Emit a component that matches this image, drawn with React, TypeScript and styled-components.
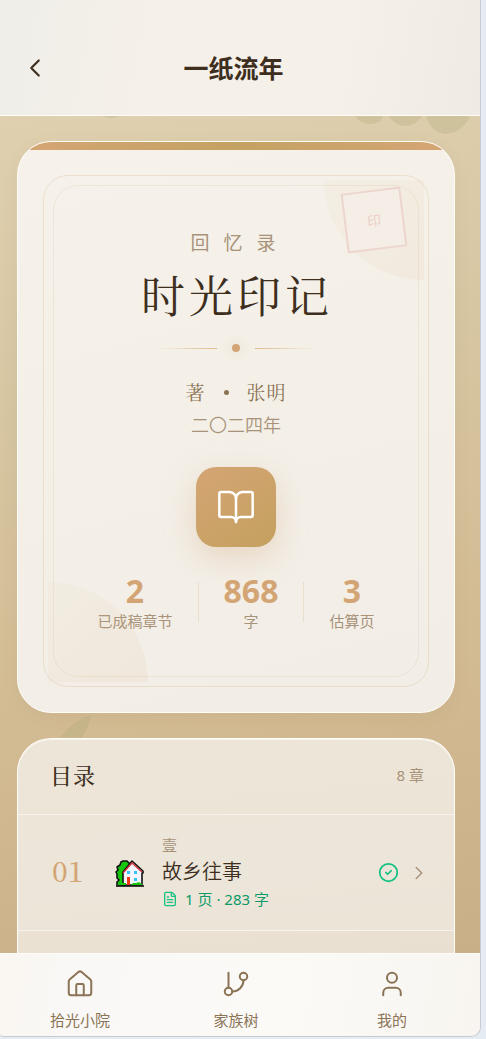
import React from "react";
import styled, { createGlobalStyle } from "styled-components";
import {
  BookOpen,
  ChevronLeft,
  ChevronRight,
  CircleCheck,
  FileText,
  GitBranch,
  House,
  User,
} from "lucide-react";

const sans = `"Noto Sans", "Noto Sans CJK SC", sans-serif`;
const serif = `"Noto Serif CJK SC", "Noto Serif SC", "Liberation Serif", "Noto Sans CJK SC", serif`;

const GlobalStyle = createGlobalStyle`
  *, *::before, *::after { box-sizing: border-box; }
  body { margin: 0; background: #e6ecf3; font-family: ${sans}; color: #3d2e1e; }
  button { font: inherit; color: inherit; border: 0; padding: 0; background: none; cursor: pointer; }
  a { color: inherit; text-decoration: none; }
  h1, h2, h3, p { margin: 0; font-weight: 400; }
  svg { display: block; }
`;

const Page = styled.div`
  display: flex;
  height: 100vh;
  padding: 0 5px 2px 0;
`;

const Phone = styled.div`
  display: flex;
  flex-direction: column;
  flex: 1;
  min-width: 0;
  overflow: hidden;
  border: solid #c9ccce;
  border-width: 0 1px 1px 0;
  border-radius: 0 0 10px 4px;
`;

const Header = styled.header`
  display: grid;
  grid-template-columns: 36px 1fr 36px;
  align-items: center;
  flex: none;
  padding: 45px 30px 25px 17px;
  border-bottom: 1px solid #fffdf8;
  background: linear-gradient(100deg, #efeee8 0%, #f5f0e9 32%, #f5f0e8 70%, #efebe4 100%);
`;

const BackButton = styled.button`
  display: flex;
  align-items: center;
  justify-content: center;
  width: 36px;
  height: 45px;
`;

const PageTitle = styled.h1`
  font-size: 25px;
  font-weight: 700;
  line-height: 36px;
  text-align: center;
`;

const Main = styled.main`
  position: relative;
  display: flex;
  flex-direction: column;
  gap: 25px;
  flex: 1;
  min-height: 0;
  overflow: hidden;
  padding: 25px 25px 0 17px;
  background: linear-gradient(168deg, #dfd0b0 0%, #d6c5a0 35%, #d2ba92 68%, #c9af87 100%);
`;

const Foliage = styled.svg`
  position: absolute;
  top: 0;
  left: 0;
  width: 100%;
  height: 100%;
  fill: #aaa878;
  opacity: 0.27;
`;

const Cover = styled.section`
  position: relative;
  flex: none;
  overflow: hidden;
  border: 1px solid #fffdf8;
  border-radius: 34px;
  background: linear-gradient(165deg, #f6f1ea 0%, #f4f0e8 45%, #f2ede6 100%);
  box-shadow: 0 4px 16px rgba(139, 115, 85, 0.08);

  &::before {
    content: "";
    display: block;
    height: 8px;
    background: linear-gradient(90deg, #d4a574, #c4a263 50%, #d4a574);
  }
`;

const Frame = styled.div`
  position: relative;
  margin: 25px;
  padding: 9px;
  border: 1px solid rgba(212, 180, 130, 0.28);
  border-radius: 25px;
`;

const InnerFrame = styled.div`
  display: flex;
  flex-direction: column;
  align-items: center;
  padding: 42px 0 44px;
  border: 1px solid rgba(212, 180, 130, 0.18);
  border-radius: 25px;
`;

const Corner = styled.div<{ $place: "top" | "bottom" }>`
  position: absolute;
  width: 100px;
  height: 100px;
  background: linear-gradient(135deg, rgba(212, 180, 116, 0.05), rgba(212, 165, 116, 0.09));
  ${({ $place }) =>
    $place === "top"
      ? "top: 4px; right: 4px; border-bottom-left-radius: 100px;"
      : "bottom: 4px; left: 4px; border-top-right-radius: 100px;"}
`;

const Seal = styled.div`
  position: absolute;
  top: 14px;
  right: 24px;
  display: flex;
  align-items: center;
  justify-content: center;
  width: 60px;
  height: 60px;
  border: 2px solid #edd5cd;
  background: #f4eee6;
  color: #edd1c9;
  font-size: 14px;
  transform: rotate(-7deg);
`;

const Kind = styled.p`
  padding-left: 8px;
  color: #a8937a;
  font-size: 19px;
  letter-spacing: 14px;
  line-height: 30px;
`;

const BookTitle = styled.h2`
  margin-top: 7px;
  padding-left: 2px;
  font-family: ${serif};
  font-size: 44px;
  letter-spacing: 4px;
  line-height: 58px;
`;

const Divider = styled.div`
  display: flex;
  align-items: center;
  gap: 15px;
  margin-top: 21px;
`;

const Rule = styled.span<{ $side: "left" | "right" }>`
  width: 60px;
  height: 1px;
  background: linear-gradient(to ${({ $side }) => $side}, #dfb98d, transparent);
`;

const Dot = styled.span`
  width: 8px;
  height: 8px;
  border-radius: 50%;
  background: #d4a574;
  box-shadow: 0 0 12px rgba(212, 165, 116, 0.4);
`;

const Byline = styled.p`
  display: flex;
  align-items: center;
  gap: 18px;
  margin-top: 25px;
  color: #8b7355;
  font-family: ${serif};
  font-size: 19px;
  font-weight: 400;
  letter-spacing: 1px;
  line-height: 30px;
`;

const Bullet = styled.span`
  width: 5px;
  height: 5px;
  border-radius: 50%;
  background: #8b7355;
`;

const Year = styled.p`
  margin-top: 4px;
  color: #a8937a;
  font-size: 18px;
  font-weight: 350;
  line-height: 28px;
`;

const BookBadge = styled.div`
  display: flex;
  align-items: center;
  justify-content: center;
  width: 80px;
  height: 80px;
  margin-top: 28px;
  border-radius: 20px;
  background: linear-gradient(145deg, #d4a574, #c4a05f);
  color: #fff;
  box-shadow: 0 10px 30px rgba(212, 165, 116, 0.34);
`;

const Stats = styled.dl`
  display: flex;
  align-items: center;
  gap: 25px;
  margin: 25px 0 0;
`;

const Stat = styled.div`
  display: flex;
  flex-direction: column;
  align-items: center;
`;

const StatValue = styled.dd`
  order: -1;
  margin: 0;
  color: #d4a574;
  font-size: 32px;
  font-weight: 700;
  line-height: 38px;
`;

const StatLabel = styled.dt`
  color: #a8937a;
  font-size: 15px;
  line-height: 22px;
`;

const StatLine = styled.span`
  width: 1px;
  height: 40px;
  background: #eadfce;
`;

const Contents = styled.section`
  position: relative;
  flex: 1 0 auto;
  border: 1px solid #fffdf8;
  border-width: 1px 1px 0;
  border-radius: 34px 34px 0 0;
  background: linear-gradient(175deg, #ede5d7 0%, #ece4d7 60%, #e9dfd0 100%);
  box-shadow: inset 0 1px 1px rgba(255, 255, 255, 0.6);
`;

const ContentsHead = styled.div`
  display: flex;
  align-items: center;
  justify-content: space-between;
  height: 76px;
  padding: 0 30px 4px 32px;
  border-bottom: 1px solid #f7f3ec;
`;

const ContentsTitle = styled.h2`
  font-family: ${serif};
  font-size: 22px;
  font-weight: 500;
  letter-spacing: 1px;
`;

const ContentsCount = styled.span`
  color: #a8937a;
  font-size: 15px;
`;

const Chapter = styled.a`
  display: flex;
  align-items: center;
  height: 116px;
  padding: 0 24px 0 34px;
  border-bottom: 1px solid #f7f3ec;
  background: rgba(236, 230, 218, 0.6);
`;

const ChapterNumber = styled.span`
  width: 63px;
  padding-bottom: 6px;
  color: #d4a574;
  font-family: ${serif};
  font-size: 28px;
  font-weight: 500;
  line-height: 38px;
`;

const ChapterText = styled.div`
  flex: 1;
  margin-left: 17px;
  padding-bottom: 2px;
`;

const ChapterOrder = styled.p`
  color: #a8937a;
  font-size: 15px;
  line-height: 24px;
`;

const ChapterTitle = styled.h3`
  font-size: 20px;
  font-weight: 350;
  line-height: 30px;
`;

const ChapterMeta = styled.p`
  display: flex;
  align-items: center;
  gap: 7px;
  color: #0d9a68;
  font-size: 15px;
  line-height: 24px;

  svg { color: #1cc283; }
`;

const ChapterStatus = styled.span`
  display: flex;
  align-items: center;
  gap: 9px;
  color: #a8937a;

  svg:first-child { color: #10c081; }
`;

const TabBar = styled.nav`
  display: grid;
  grid-template-columns: repeat(3, 1fr);
  flex: none;
  height: 83px;
  padding: 15px 10px 0 2px;
  border-top: 1px solid #fffdf8;
  background: linear-gradient(100deg, #faf6f1 0%, #f9f8f6 15%, #fbfaf7 60%, #f8f5f0 100%);
`;

const Tab = styled.a`
  display: flex;
  flex-direction: column;
  align-items: center;
  gap: 9px;
  color: #8b7355;
  font-size: 15px;
  line-height: 24px;
`;

function CottageIcon() {
  return (
    <svg width="30" height="28" viewBox="0 0 30 28" aria-hidden="true">
      <path
        d="M8 2h4l3 3-1 16-3 5H2v-3l2-2-2-2v-4l-1-2 2-2-1-3 3-2 1-3z"
        fill="#16c60c"
        stroke="#111"
        strokeWidth="1.6"
        strokeLinejoin="round"
      />
      <path
        d="M8 26V13l9-11 11 10v2h-1v12z"
        fill="#f4f4ff"
        stroke="#111"
        strokeWidth="1.6"
        strokeLinejoin="round"
      />
      <path d="m8 14 9-10 10 9" fill="none" stroke="#d13438" strokeWidth="1.4" />
      <path d="M12 12h3v3h-3zM19 12h3v3h-3zM19 19h3v3h-3z" fill="#35c1f1" />
      <path d="M12 18h3v8h-3z" fill="#f03a17" />
      <path d="m2 26 3-3 3 1h3v2zM16 26l2-2h3l3-1 4 3z" fill="#16c60c" />
      <path d="M1 27h28" stroke="#111" strokeWidth="1.6" />
    </svg>
  );
}

const stats = [
  { value: "2", label: "已成稿章节" },
  { value: "868", label: "字" },
  { value: "3", label: "估算页" },
];

const tabs = [
  { label: "拾光小院", Icon: House },
  { label: "家族树", Icon: GitBranch },
  { label: "我的", Icon: User },
];

export default function App() {
  return (
    <>
      <GlobalStyle />
      <Page>
        <Phone>
          <Header>
            <BackButton aria-label="返回">
              <ChevronLeft size={30} strokeWidth={1.7} />
            </BackButton>
            <PageTitle>一纸流年</PageTitle>
          </Header>
          <Main>
            <Foliage aria-hidden="true">
              <ellipse cx="111" cy="-5" rx="12" ry="7" />
              <path d="M355 0h28q-2 8-14 8-9-1-14-8z" />
              <path d="M389 0h33q-6 10-18 10-10-1-15-10z" />
              <path d="M426 0h44q-8 17-25 18-14-2-19-18z" />
              <path d="M91 599q-2 14-12 27H58q10-19 33-27z" />
            </Foliage>
            <Cover>
              <Frame>
                <Corner $place="top" />
                <Corner $place="bottom" />
                <Seal>印</Seal>
                <InnerFrame>
                  <Kind>回忆录</Kind>
                  <BookTitle>时光印记</BookTitle>
                  <Divider>
                    <Rule $side="left" />
                    <Dot />
                    <Rule $side="right" />
                  </Divider>
                  <Byline>
                    <span>著</span>
                    <Bullet />
                    <span>张明</span>
                  </Byline>
                  <Year>二〇二四年</Year>
                  <BookBadge>
                    <BookOpen size={40} strokeWidth={1.5} />
                  </BookBadge>
                  <Stats>
                    {stats.map(({ value, label }, i) => (
                      <React.Fragment key={label}>
                        {i > 0 && <StatLine />}
                        <Stat>
                          <StatLabel>{label}</StatLabel>
                          <StatValue>{value}</StatValue>
                        </Stat>
                      </React.Fragment>
                    ))}
                  </Stats>
                </InnerFrame>
              </Frame>
            </Cover>
            <Contents>
              <ContentsHead>
                <ContentsTitle>目录</ContentsTitle>
                <ContentsCount>8 章</ContentsCount>
              </ContentsHead>
              <Chapter href="#chapter-1">
                <ChapterNumber>01</ChapterNumber>
                <CottageIcon />
                <ChapterText>
                  <ChapterOrder>壹</ChapterOrder>
                  <ChapterTitle>故乡往事</ChapterTitle>
                  <ChapterMeta>
                    <FileText size={16} strokeWidth={2} />
                    <span>1 页 · 283 字</span>
                  </ChapterMeta>
                </ChapterText>
                <ChapterStatus>
                  <CircleCheck size={21} strokeWidth={2} />
                  <ChevronRight size={22} strokeWidth={1.7} />
                </ChapterStatus>
              </Chapter>
            </Contents>
          </Main>
          <TabBar>
            {tabs.map(({ label, Icon }) => (
              <Tab key={label} href={`#${label}`}>
                <Icon size={30} strokeWidth={1.6} />
                {label}
              </Tab>
            ))}
          </TabBar>
        </Phone>
      </Page>
    </>
  );
}
